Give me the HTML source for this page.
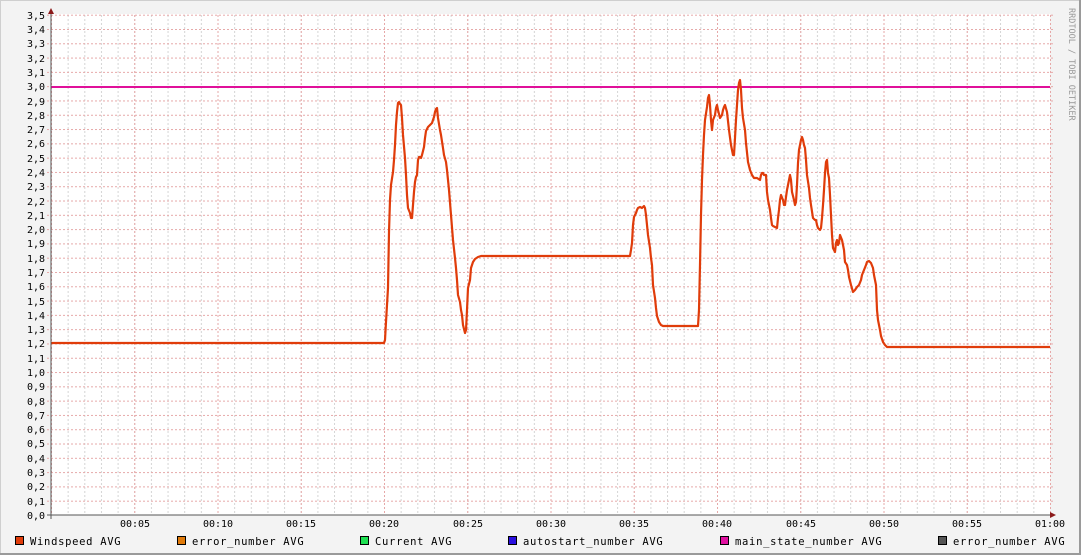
<!DOCTYPE html>
<html><head><meta charset="utf-8"><style>
html,body{margin:0;padding:0}
body{width:1081px;height:555px;overflow:hidden;background:#f3f3f3}
svg{display:block}
text{font-family:"DejaVu Sans Mono","Liberation Mono",monospace;font-size:10px;fill:#000}
.lg{letter-spacing:0.7px;font-size:10.5px}
</style></head><body>
<svg width="1081" height="555" viewBox="0 0 1081 555" xmlns="http://www.w3.org/2000/svg">
<defs>
<pattern id="vmin" x="51" y="0" width="16.65" height="4" patternUnits="userSpaceOnUse">
<line x1="0.5" y1="0" x2="0.5" y2="4" stroke="#d4d4d4" stroke-dasharray="1,2"/></pattern>
<pattern id="vmaj" x="51" y="0" width="83.25" height="4" patternUnits="userSpaceOnUse">
<line x1="0.5" y1="0" x2="0.5" y2="4" stroke="#e6a8a8" stroke-dasharray="1,2"/></pattern>
<pattern id="hmaj" x="0" y="14.7" width="4" height="14.294" patternUnits="userSpaceOnUse">
<line x1="0" y1="0.5" x2="4" y2="0.5" stroke="#e6a8a8" stroke-dasharray="1,2"/></pattern>
</defs>
<rect x="0" y="0" width="1081" height="555" fill="#f3f3f3"/>
<rect x="0.5" y="0.5" width="1080" height="554" fill="none" stroke="#cfcfcf"/>
<line x1="0" y1="554" x2="1081" y2="554" stroke="#9a9a9a" stroke-width="2"/>
<line x1="1080" y1="0" x2="1080" y2="555" stroke="#9a9a9a" stroke-width="2"/>
<rect x="51" y="14" width="999" height="501" fill="#fff"/>
<rect x="51" y="14" width="1000" height="501" fill="url(#vmin)"/>
<rect x="51" y="14" width="1000" height="501" fill="url(#vmaj)"/>
<rect x="47" y="14" width="1008" height="501" fill="url(#hmaj)"/>
<line x1="51" y1="87" x2="1050" y2="87" stroke="#e0109a" stroke-width="2"/>
<polyline fill="none" stroke="#e03c0a" stroke-width="2.2" stroke-linejoin="round" points="51,343 384,343 385,340 386,322 388,288 389,232 390,200 391,185 393,172 394,160 395,145 396,125 397,112 398,103 399,102 400,104 401,105 402,118 403,135 405,158 406,175 407,195 408,208 410,213 411,218 412,218 413,205 414,192 415,182 416,177 417,175 418,160 419,157 420,157 421,158 422,155 424,147 425,138 426,131 428,127 430,125 432,123 434,117 435,112 436,109 437,108 438,118 440,130 441,135 443,148 444,155 446,162 447,170 449,190 451,215 453,240 455,258 456,268 457,280 458,295 460,302 461,310 462,315 463,325 465,333 466,330 467,310 468,288 470,280 471,268 473,262 475,259 478,257 481,256 500,256 630,256 631,250 632,243 633,225 634,217 636,213 637,210 638,208 640,207 642,208 644,206 645,208 646,215 647,225 648,235 650,248 651,258 652,265 653,285 655,298 656,308 657,316 659,322 661,325 663,326 698,326 699,310 700,265 701,215 702,180 703,155 704,135 705,120 707,107 708,98 709,95 710,105 711,120 712,130 713,120 715,115 716,108 717,105 718,110 720,118 722,115 723,110 724,107 725,105 727,112 729,130 731,145 733,155 734,155 735,138 736,120 737,105 738,90 739,83 740,80 741,90 742,108 743,118 745,130 746,143 748,162 750,170 752,175 754,178 757,178 760,180 761,175 762,173 763,173 764,175 766,175 767,192 768,200 770,210 771,218 772,225 773,226 775,227 777,228 778,218 779,210 780,200 781,195 783,200 784,205 785,205 786,197 787,190 789,180 790,175 791,180 792,192 794,200 795,205 796,202 797,185 798,163 799,150 801,140 802,137 803,140 804,145 805,148 806,160 807,175 809,188 810,198 811,205 813,218 815,220 816,220 817,225 818,228 820,230 821,228 822,218 823,205 824,190 825,173 826,162 827,160 828,173 829,178 830,195 831,215 832,235 833,248 835,252 836,243 837,240 838,245 839,243 840,235 842,240 843,245 844,250 845,262 847,265 848,270 849,277 851,285 853,292 855,290 857,287 859,285 861,280 862,275 864,270 866,265 867,262 869,261 871,263 873,268 874,275 876,285 877,310 878,320 880,330 881,336 883,342 885,345 887,347 1050,347"/>
<line x1="51" y1="10" x2="51" y2="519" stroke="#555"/>
<line x1="47" y1="515" x2="1053" y2="515" stroke="#555"/>
<polygon points="48,14 54,14 51,8" fill="#8b1a1a"/>
<polygon points="1050,512 1050,518 1056,515" fill="#8b1a1a"/>
<g text-anchor="end">
<text x="45" y="19">3,5</text><text x="45" y="33">3,4</text><text x="45" y="47">3,3</text><text x="45" y="62">3,2</text><text x="45" y="76">3,1</text><text x="45" y="90">3,0</text><text x="45" y="105">2,9</text><text x="45" y="119">2,8</text><text x="45" y="133">2,7</text><text x="45" y="147">2,6</text><text x="45" y="162">2,5</text><text x="45" y="176">2,4</text><text x="45" y="190">2,3</text><text x="45" y="205">2,2</text><text x="45" y="219">2,1</text><text x="45" y="233">2,0</text><text x="45" y="247">1,9</text><text x="45" y="262">1,8</text><text x="45" y="276">1,7</text><text x="45" y="290">1,6</text><text x="45" y="305">1,5</text><text x="45" y="319">1,4</text><text x="45" y="333">1,3</text><text x="45" y="347">1,2</text><text x="45" y="362">1,1</text><text x="45" y="376">1,0</text><text x="45" y="390">0,9</text><text x="45" y="405">0,8</text><text x="45" y="419">0,7</text><text x="45" y="433">0,6</text><text x="45" y="447">0,5</text><text x="45" y="462">0,4</text><text x="45" y="476">0,3</text><text x="45" y="490">0,2</text><text x="45" y="505">0,1</text><text x="45" y="519">0,0</text>
</g>
<g text-anchor="middle">
<text x="135" y="527">00:05</text><text x="218" y="527">00:10</text><text x="301" y="527">00:15</text><text x="384" y="527">00:20</text><text x="468" y="527">00:25</text><text x="551" y="527">00:30</text><text x="634" y="527">00:35</text><text x="717" y="527">00:40</text><text x="801" y="527">00:45</text><text x="884" y="527">00:50</text><text x="967" y="527">00:55</text><text x="1050" y="527">01:00</text>
</g>
<g stroke="#000" stroke-width="1">
<rect x="15.5" y="536.5" width="8" height="8" fill="#e03c0a"/>
<rect x="177.5" y="536.5" width="8" height="8" fill="#e07a0a"/>
<rect x="360.5" y="536.5" width="8" height="8" fill="#1ee052"/>
<rect x="508.5" y="536.5" width="8" height="8" fill="#2a10e0"/>
<rect x="720.5" y="536.5" width="8" height="8" fill="#e010a0"/>
<rect x="938.5" y="536.5" width="8" height="8" fill="#555"/>
</g>
<text class="lg" x="30" y="545">Windspeed AVG</text>
<text class="lg" x="192" y="545">error_number AVG</text>
<text class="lg" x="375" y="545">Current AVG</text>
<text class="lg" x="523" y="545">autostart_number AVG</text>
<text class="lg" x="735" y="545">main_state_number AVG</text>
<text class="lg" x="953" y="545">error_number AVG</text>
<text transform="translate(1069,8) rotate(90)" style="font-size:8.5px;fill:#999">RRDTOOL / TOBI OETIKER</text>
</svg>
</body></html>
